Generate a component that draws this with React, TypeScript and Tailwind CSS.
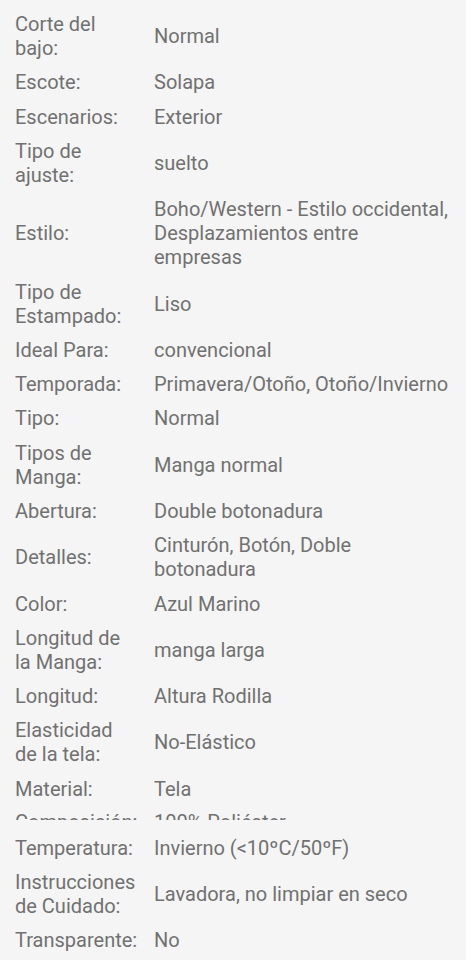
import React from "react";

type Spec = { label: string; value: string };

const specs: Spec[] = [
  { label: "Corte del bajo:", value: "Normal" },
  { label: "Escote:", value: "Solapa" },
  { label: "Escenarios:", value: "Exterior" },
  { label: "Tipo de ajuste:", value: "suelto" },
  { label: "Estilo:", value: "Boho/Western - Estilo occidental, Desplazamientos entre\nempresas" },
  { label: "Tipo de Estampado:", value: "Liso" },
  { label: "Ideal Para:", value: "convencional" },
  { label: "Temporada:", value: "Primavera/Otoño, Otoño/Invierno" },
  { label: "Tipo:", value: "Normal" },
  { label: "Tipos de Manga:", value: "Manga normal" },
  { label: "Abertura:", value: "Double botonadura" },
  { label: "Detalles:", value: "Cinturón, Botón, Doble botonadura" },
  { label: "Color:", value: "Azul Marino" },
  { label: "Longitud de la Manga:", value: "manga larga" },
  { label: "Longitud:", value: "Altura Rodilla" },
  { label: "Elasticidad de la tela:", value: "No-Elástico" },
  { label: "Material:", value: "Tela" },
];

const tail: Spec[] = [
  { label: "Temperatura:", value: "Invierno (<10ºC/50ºF)" },
  { label: "Instrucciones de Cuidado:", value: "Lavadora, no limpiar en seco" },
  { label: "Transparente:", value: "No" },
];

const Row = ({ label, value }: Spec) => (
  <div className="flex items-center py-[5.15px]">
    <div className="w-[139px] shrink-0 pr-[18px]">{label}</div>
    <div className="flex-1 min-w-0 whitespace-pre-line">{value}</div>
  </div>
);

export default function App() {
  return (
    <div
      className="min-h-[960px] w-full bg-[#f5f5f5] pl-[15px] pr-[14px] pt-[7px] text-[20px] leading-[24px] text-[#717171]"
      style={{ fontFamily: "Roboto, 'Noto Sans', sans-serif" }}
    >
      {specs.map((s) => (
        <Row key={s.label} {...s} />
      ))}
      {/* half-captured row from the stitched screenshot */}
      <div className="h-[25px]">
        <div className="h-[14px] overflow-hidden">
          <div className="flex pt-[4px]">
            <div className="w-[139px] shrink-0 pr-[18px]">Composición:</div>
            <div className="flex-1">100% Poliéster</div>
          </div>
        </div>
      </div>
      {tail.map((s) => (
        <Row key={s.label} {...s} />
      ))}
    </div>
  );
}
